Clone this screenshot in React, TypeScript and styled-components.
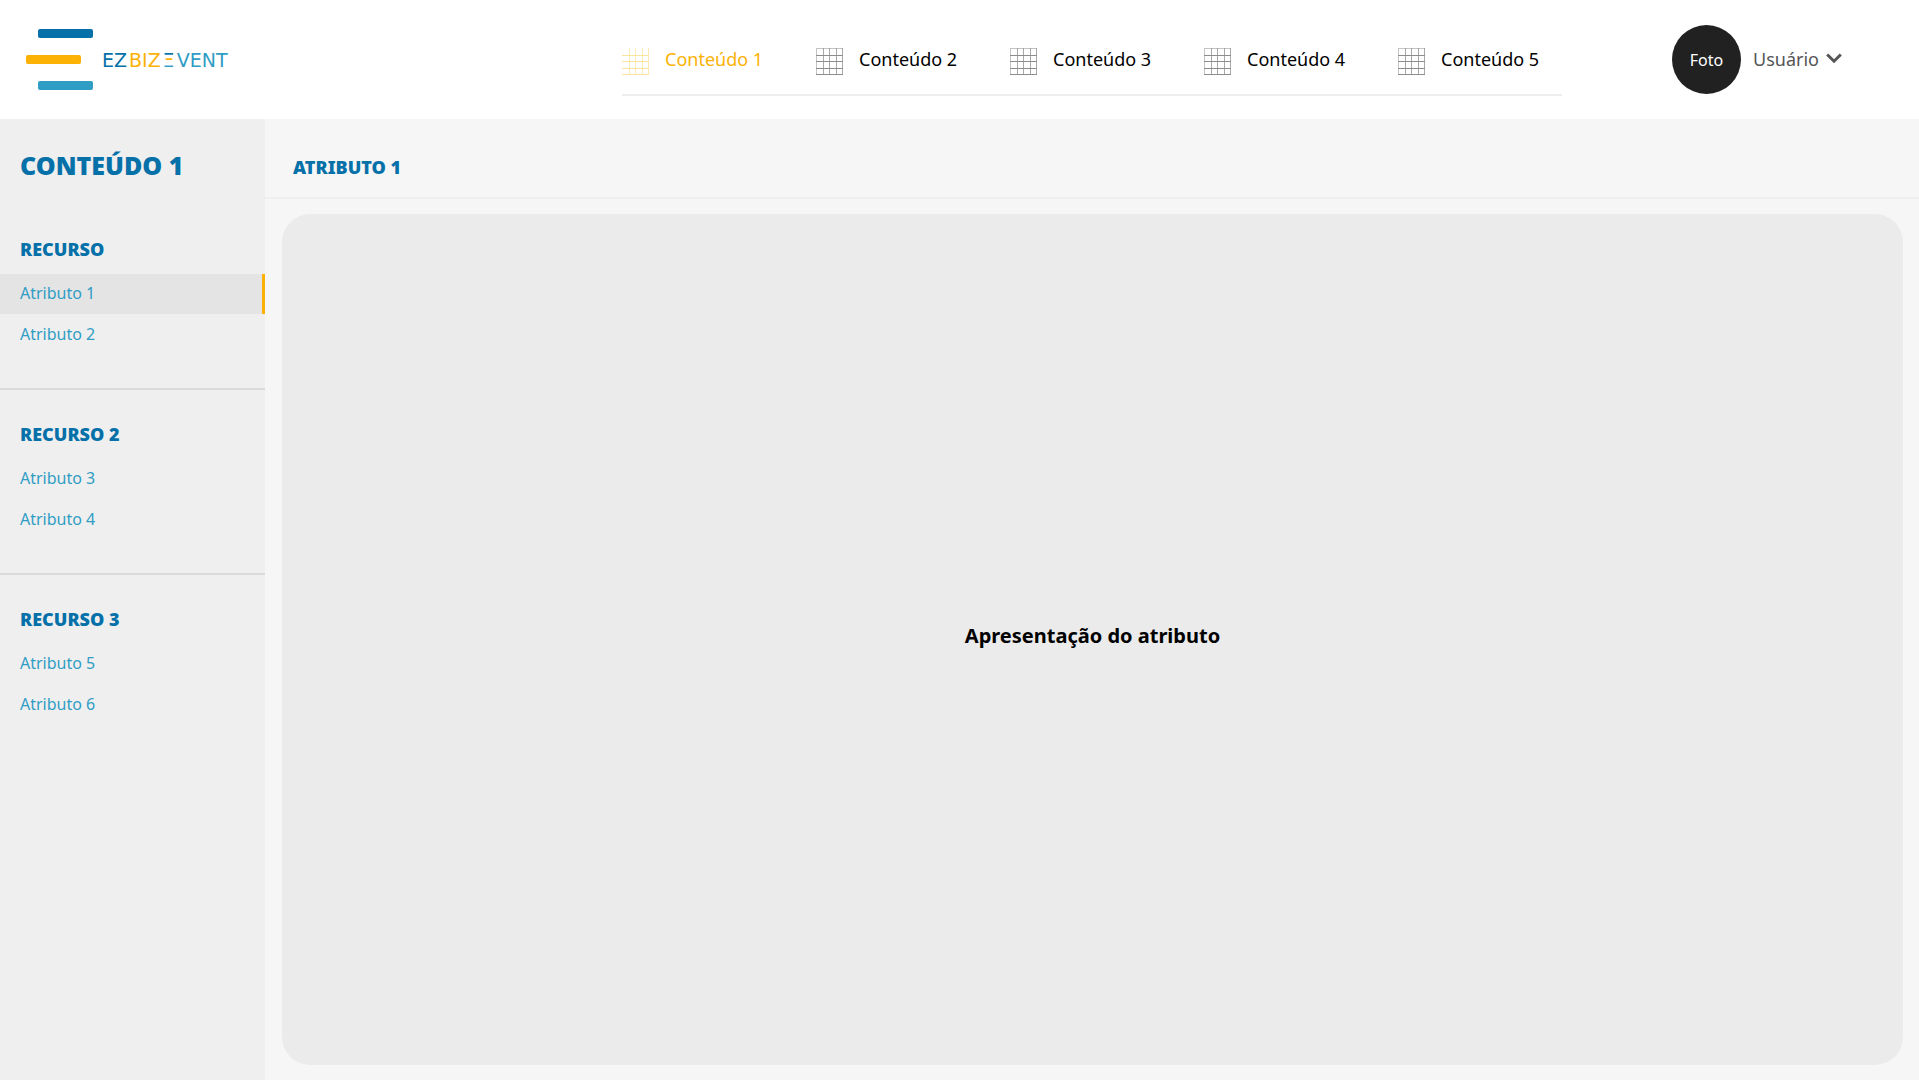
import React from "react";
import styled, { createGlobalStyle } from "styled-components";

const GlobalStyle = createGlobalStyle`
  *, *::before, *::after { box-sizing: border-box; }
  body {
    margin: 0;
    background: #f6f6f6;
    font-family: "Noto Sans", "Open Sans", sans-serif;
  }
  h1, h2, h3, p, ul { margin: 0; padding: 0; }
  ul { list-style: none; }
  a { color: inherit; text-decoration: none; }
  button { font: inherit; border: 0; background: none; padding: 0; cursor: pointer; }
`;

const Page = styled.div`
  min-height: 100vh;
  display: grid;
  grid-template-rows: 119px 1fr;
`;

const Header = styled.header`
  display: grid;
  grid-template-columns: 265px 1fr auto 1fr;
  align-items: center;
  background: #ffffff;
`;

const Brand = styled.a`
  display: flex;
  align-items: center;
  gap: 8px;
  padding-left: 26px;
`;

const Wordmark = styled.span`
  display: flex;
  gap: 2px;
  font-family: "DejaVu Sans", sans-serif;
  font-size: 19px;
  line-height: 24px;
`;

const Letters = styled.span<{ $color: string }>`
  color: ${(p) => p.$color};
`;

const BarsLetter = styled.span`
  color: transparent;
  background: linear-gradient(#0670a9 0 42%, #fcb205 42% 62%, #2f9dc4 62%);
  background-clip: text;
`;

const Tabs = styled.nav`
  grid-column: 3;
  align-self: end;
  display: flex;
  gap: 30px;
  height: 72px;
  margin-bottom: 23px;
  border-bottom: 2px solid #eeeeee;
`;

const Tab = styled.a<{ $active?: boolean }>`
  display: flex;
  align-items: center;
  gap: 16px;
  width: 164px;
  color: ${(p) => (p.$active ? "#fcb205" : "#000000")};
  font-size: 18px;
  line-height: 24px;
  white-space: nowrap;

  svg {
    margin-top: 4px;
  }
`;

const User = styled.div`
  display: flex;
  align-items: center;
  justify-content: flex-end;
  gap: 12px;
  padding-right: 77px;
`;

const Avatar = styled.span`
  display: grid;
  place-items: center;
  width: 69px;
  height: 69px;
  border-radius: 50%;
  background: #212121;
  color: #ffffff;
  font-size: 16px;
  line-height: 24px;
`;

const UserButton = styled.button`
  display: flex;
  align-items: center;
  gap: 7px;
  padding-bottom: 2px;
  color: #555555;
  font-size: 18px;
  line-height: 24px;
`;

const Body = styled.div`
  display: grid;
  grid-template-columns: 265px 1fr;
`;

const Sidebar = styled.aside`
  background: #efefef;
  color: #0670a9;
`;

const SidebarTitle = styled.h1`
  padding: 30px 20px 36px;
  font-size: 25px;
  font-weight: 900;
  line-height: 32px;
`;

const Group = styled.section`
  height: 185px;
  padding-top: 20px;

  & + & {
    border-top: 2px solid #dadada;
    padding-top: 32px;
  }
  &:first-of-type {
    height: 171px;
  }
`;

const GroupTitle = styled.h2`
  padding: 0 20px 13px;
  font-size: 18px;
  font-weight: 900;
  line-height: 24px;
`;

const Links = styled.ul`
  display: grid;
  gap: 1px;
`;

const SideLink = styled.a<{ $active?: boolean }>`
  display: flex;
  align-items: center;
  height: 40px;
  padding: 0 20px 2px;
  color: #2f9dc4;
  font-size: 16px;
  line-height: 24px;
  background: ${(p) => (p.$active ? "#e4e4e4" : "transparent")};
  border-right: 3px solid ${(p) => (p.$active ? "#fcb205" : "transparent")};
`;

const Main = styled.main`
  display: flex;
  flex-direction: column;
`;

const MainHeader = styled.div`
  padding: 36px 28px 18px;
  border-bottom: 2px solid #efefef;
`;

const MainTitle = styled.h2`
  color: #0670a9;
  font-size: 18px;
  font-weight: 900;
  line-height: 24px;
`;

const Panel = styled.section`
  flex: 1;
  display: grid;
  place-items: center;
  margin: 15px 16px 15px 17px;
  border-radius: 28px;
  background: #ebebeb;
`;

const PanelText = styled.p`
  font-size: 20px;
  font-weight: 700;
  line-height: 28px;
  padding-bottom: 8px;
`;

const LogoMark = () => (
  <svg width="68" height="62" viewBox="0 0 68 62" aria-hidden="true">
    <rect x="12" y="0" width="55" height="9" rx="2" fill="#0670a9" />
    <rect x="0" y="26" width="55" height="9" rx="2" fill="#fcb205" />
    <rect x="12" y="52" width="55" height="9" rx="2" fill="#2f9dc4" />
  </svg>
);

const GridIcon = ({ active }: { active?: boolean }) => (
  <svg width="27" height="27" viewBox="0 0 27 27" fill="none" stroke={active ? "#fee3a0" : "#8c8c8c"} aria-hidden="true">
    {!active && <path d="M0 .5H27M.5 0V27" stroke="#c4c4c4" />}
    <path d="M7.5 0V27M13.5 0V27M20.5 0V27M26.5 0V27" opacity=".75" />
    <path d="M0 7.5H27M0 13.5H27M0 20.5H27M0 26.5H27" />
  </svg>
);

const Chevron = () => (
  <svg width="16" height="11" viewBox="0 0 16 11" fill="none" stroke="#555555" strokeWidth="3" aria-hidden="true">
    <path d="M1.2 1.5L8 8.2L14.8 1.5" />
  </svg>
);

const tabs = ["Conteúdo 1", "Conteúdo 2", "Conteúdo 3", "Conteúdo 4", "Conteúdo 5"];

const groups = [
  { title: "RECURSO", items: ["Atributo 1", "Atributo 2"] },
  { title: "RECURSO 2", items: ["Atributo 3", "Atributo 4"] },
  { title: "RECURSO 3", items: ["Atributo 5", "Atributo 6"] },
];

export default function App() {
  return (
    <>
      <GlobalStyle />
      <Page>
        <Header>
          <Brand href="#">
            <LogoMark />
            <Wordmark>
              <Letters $color="#0670a9">EZ</Letters>
              <Letters $color="#fcb205">BIZ</Letters>
              <BarsLetter>Ξ</BarsLetter>
              <Letters $color="#2f9dc4">VENT</Letters>
            </Wordmark>
          </Brand>
          <Tabs>
            {tabs.map((name, i) => (
              <Tab key={name} href="#" $active={i === 0}>
                <GridIcon active={i === 0} />
                {name}
              </Tab>
            ))}
          </Tabs>
          <User>
            <Avatar>Foto</Avatar>
            <UserButton type="button">
              Usuário
              <Chevron />
            </UserButton>
          </User>
        </Header>
        <Body>
          <Sidebar>
            <SidebarTitle>CONTEÚDO 1</SidebarTitle>
            {groups.map((group) => (
              <Group key={group.title}>
                <GroupTitle>{group.title}</GroupTitle>
                <Links>
                  {group.items.map((item) => (
                    <li key={item}>
                      <SideLink href="#" $active={item === "Atributo 1"}>
                        {item}
                      </SideLink>
                    </li>
                  ))}
                </Links>
              </Group>
            ))}
          </Sidebar>
          <Main>
            <MainHeader>
              <MainTitle>ATRIBUTO 1</MainTitle>
            </MainHeader>
            <Panel>
              <PanelText>Apresentação do atributo</PanelText>
            </Panel>
          </Main>
        </Body>
      </Page>
    </>
  );
}
